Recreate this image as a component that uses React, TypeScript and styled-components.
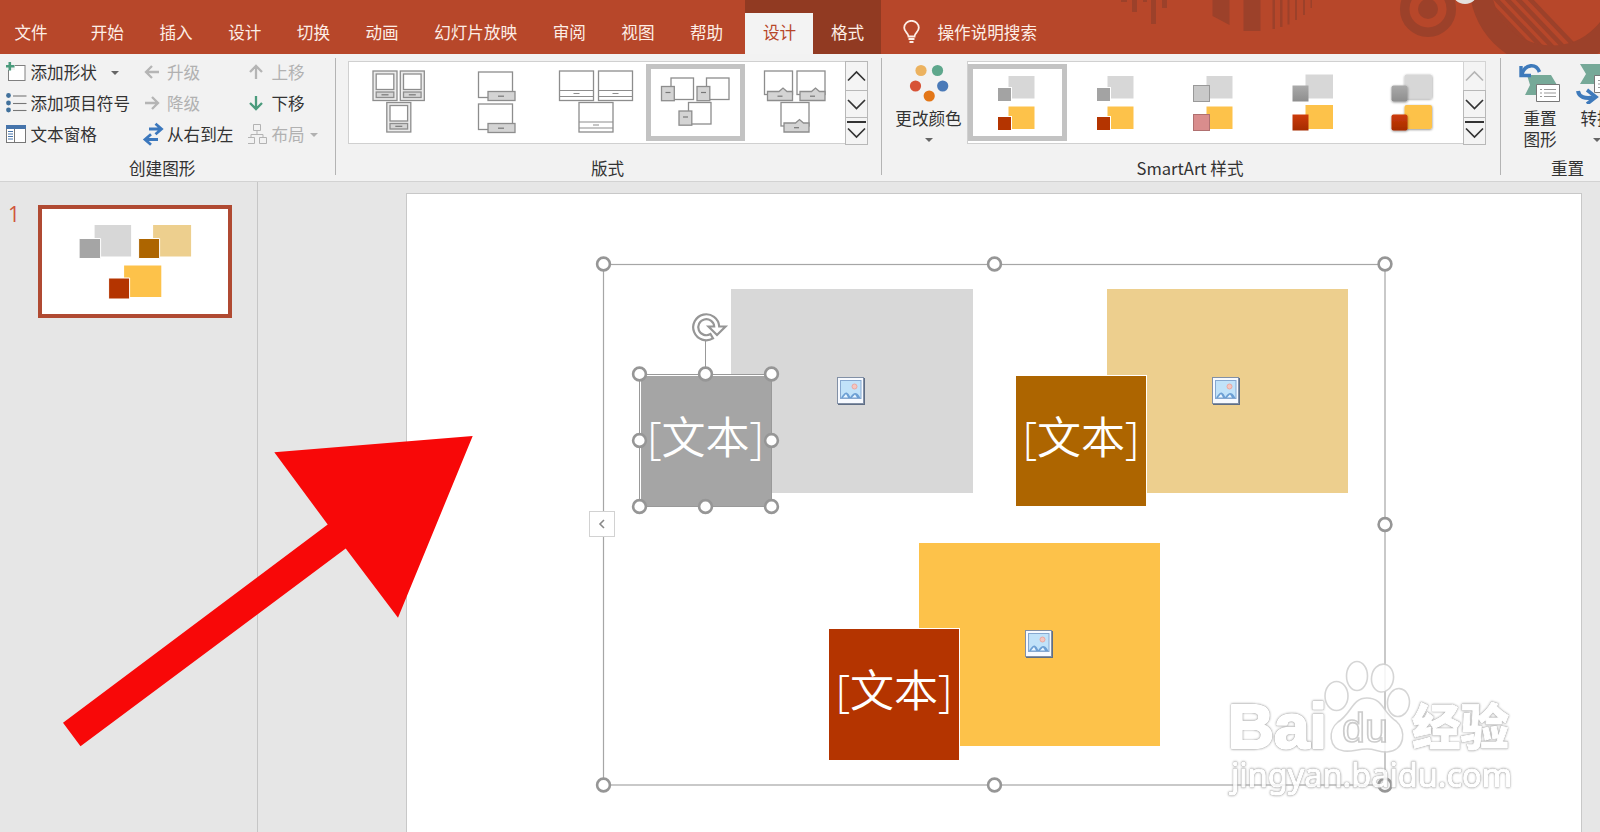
import React from "react";
import styled, { createGlobalStyle, css } from "styled-components";

const GlobalStyle = createGlobalStyle`
  * { box-sizing: border-box; }
  html, body { margin: 0; padding: 0; }
  body { overflow: hidden; font-family: "Noto Sans CJK SC", "Noto Sans", sans-serif; }
`;

const Window = styled.div`
  width: 1600px;
  height: 832px;
  position: relative;
  display: flex;
  flex-direction: column;
  overflow: hidden;
  background: #e6e6e6;
  font-size: 16.6px;
  color: #333;
`;

/* ---------- title / tab strip ---------- */

const TabStrip = styled.header`
  position: relative;
  flex: 0 0 54px;
  display: flex;
  background: #b7472a;
`;

const HeaderArt = styled.svg`
  position: absolute;
  right: 0;
  top: 0;
`;

const Tab = styled.div<{ $first?: boolean }>`
  display: flex;
  align-items: center;
  height: 54px;
  padding: 9px 17.75px 0;
  line-height: 24px;
  white-space: nowrap;
  color: #fdeee6;
  ${(p) => p.$first && css`width: 73px; padding-left: 14.5px;`}
`;

const ContextTabs = styled.div`
  display: flex;
  align-items: flex-end;
  width: 136px;
  margin-left: 4.5px;
  background: #913a22;
`;

const ContextTab = styled.div<{ $active?: boolean }>`
  flex: 1;
  height: 41.5px;
  line-height: 39px;
  text-align: center;
  color: ${(p) => (p.$active ? "#b7472a" : "#fdeee6")};
  background: ${(p) => (p.$active ? "#f3f3f3" : "transparent")};
`;

const TellMe = styled.div`
  display: flex;
  align-items: center;
  gap: 17px;
  padding: 9px 0 0 22px;
  color: #fdeee6;
`;

/* ---------- ribbon ---------- */

const Ribbon = styled.section`
  flex: 0 0 128px;
  display: flex;
  background: #f2f2f2;
  border-bottom: 1px solid #d2d2d2;
`;

const Group = styled.div<{ $width: number }>`
  position: relative;
  flex: 0 0 ${(p) => p.$width}px;
  display: flex;
  flex-direction: column;
`;

const GroupDivider = styled.div`
  flex: 0 0 1px;
  height: 117px;
  margin-top: 4px;
  background: #b4b4b4;
`;

const GroupBody = styled.div<{ $left: number }>`
  display: flex;
  height: 102px;
  padding-left: ${(p) => p.$left}px;
`;

const GroupLabel = styled.div<{ $left: number }>`
  padding-left: ${(p) => p.$left}px;
  height: 24px;
  line-height: 25px;
  white-space: nowrap;
`;

const CommandColumn = styled.div<{ $width: number; $iconWidth: number }>`
  flex: 0 0 ${(p) => p.$width}px;
  display: grid;
  grid-template-rows: repeat(3, 31px);
  padding-top: 3px;
  height: 97px;
  --icon-width: ${(p) => p.$iconWidth}px;
`;

const Command = styled.div<{ $disabled?: boolean }>`
  display: grid;
  grid-template-columns: var(--icon-width) auto 1fr;
  align-items: center;
  white-space: nowrap;
  line-height: 24px;
  color: ${(p) => (p.$disabled ? "#b1b1b1" : "#333")};
  svg { display: block; }
  span { padding-bottom: 2px; }
`;

const Caret = styled.i<{ $gap?: number; $drop?: number; $light?: boolean }>`
  width: 0;
  height: 0;
  margin-left: ${(p) => p.$gap ?? 0}px;
  margin-top: ${(p) => p.$drop ?? 0}px;
  border: 4px solid transparent;
  border-top: 4px solid ${(p) => (p.$light ? "#b1b1b1" : "#666")};
  border-bottom: 0;
`;

const Gallery = styled.div`
  display: flex;
  height: 83px;
  margin-top: 7px;
`;

const GalleryItems = styled.div<{ $width: number }>`
  width: ${(p) => p.$width}px;
  display: flex;
  background: #fff;
  border: 1px solid #d0d0d0;
  border-right: 0;
`;

const GalleryItem = styled.div<{ $selected?: boolean }>`
  flex: 0 0 99px;
  height: 77px;
  margin-top: 2px;
  ${(p) => p.$selected && css`box-shadow: inset 0 0 0 5px #c3c3c3;`}
  svg { display: block; overflow: visible; }
`;

const Scroller = styled.div`
  width: 23px;
  display: grid;
  grid-template-rows: 29px 27px 27px;
`;

const ScrollButton = styled.div<{ $off?: boolean }>`
  display: flex;
  align-items: center;
  justify-content: center;
  border: 1px solid ${(p) => (p.$off ? "#d4d4d4" : "#b8b8b8")};
  margin-bottom: -1px;
  background: #f4f4f4;
  color: ${(p) => (p.$off ? "#b5b5b5" : "#333")};
`;

const BigButton = styled.div<{ $width: number }>`
  width: ${(p) => p.$width}px;
  flex-shrink: 0;
  display: flex;
  flex-direction: column;
  align-items: center;
  padding-top: 8px;
  line-height: 21px;
  white-space: nowrap;
  svg { display: block; margin-bottom: 4px; flex-shrink: 0; }
`;

/* ---------- workspace ---------- */

const Workspace = styled.main`
  flex: 1;
  display: flex;
  min-height: 0;
`;

const SlideList = styled.aside`
  flex: 0 0 258px;
  display: flex;
  align-items: flex-start;
  padding: 23px 0 0 8px;
  border-right: 1px solid #c6c6c6;
`;

const SlideNumber = styled.span`
  width: 29.5px;
  margin-top: -3.5px;
  font: 21px/24px "Open Sans", sans-serif;
  color: #d0553c;
`;

const Thumbnail = styled.div`
  width: 194.5px;
  height: 113px;
  background: #fff;
  border: 4px solid #b04a32;
  svg { display: block; }
`;

const Editor = styled.div`
  flex: 1;
  padding: 11px 0 0 148px;
`;

const Slide = styled.div`
  width: 1176px;
  height: 660px;
  padding: 1px 0 0 1px;
  background: #fff;
  border: 1px solid #c8c8c8;
`;

const Canvas = styled.div`
  position: relative;
  width: 1173px;
  height: 637px;
`;

const Shape = styled.div<{ $x: number; $y: number; $w: number; $h: number; $fill: string; $outline?: boolean }>`
  position: absolute;
  left: ${(p) => p.$x}px;
  top: ${(p) => p.$y}px;
  width: ${(p) => p.$w}px;
  height: ${(p) => p.$h}px;
  display: flex;
  align-items: center;
  justify-content: center;
  background: ${(p) => p.$fill};
  ${(p) => p.$outline && css`box-shadow: 0 0 0 1px #fff;`}
`;

const Placeholder = styled.span`
  padding-bottom: 9px;
  font: 350 44px/60px "Open Sans", "Noto Sans CJK SC", sans-serif;
  color: #fff;
  white-space: nowrap;
`;

const PicturePosition = styled.div<{ $x: number; $y: number }>`
  position: absolute;
  left: ${(p) => p.$x}px;
  top: ${(p) => p.$y}px;
  svg { display: block; }
`;

const CanvasOverlay = styled.svg`
  position: absolute;
  left: 0;
  top: 0;
  pointer-events: none;
`;

const Glow = styled.g`
  filter: drop-shadow(0 0 0.6px #777) drop-shadow(0 0 0.8px #999);
`;

const PaneToggle = styled.div`
  position: absolute;
  left: 181px;
  top: 316px;
  width: 26px;
  height: 26px;
  display: flex;
  align-items: center;
  justify-content: center;
  background: #fff;
  border: 1px solid #d2d2d2;
`;

/* ---------- icons ---------- */

const Chevron = ({ up, bar }: { up?: boolean; bar?: boolean }) => (
  <svg width="21" height="25" viewBox="0 0 21 25" fill="none" stroke="currentColor" strokeWidth="1.7">
    {bar && <path d="M1 3H20" strokeWidth="2" />}
    <path d={up ? "M2 16.5L10.5 8L19 16.5" : bar ? "M2 9.500L10.5 18L19 9.500" : "M2 8L10.5 16.5L19 8"} />
  </svg>
);

const AddShapeIcon = () => (
  <svg width="22" height="22" fill="none">
    <rect x="2.5" y="3.5" width="16.500" height="15" fill="#fff" stroke="#808080" />
    <path d="M0 0h9v8H0z" fill="#f2f2f2" />
    <path d="M3.800 0v8.500M-.5 4.200h9" stroke="#4a9b7c" strokeWidth="2.600" />
  </svg>
);
const BulletsIcon = () => (
  <svg width="22" height="22">
    {[2.5, 10, 17].map((y) => (
      <g key={y}>
        <circle cx="2.500" cy={y} r="2.400" fill="#41719c" />
        <path d={`M7 ${y + 0.5}H20.500`} stroke="#777" strokeWidth="1.100" />
      </g>
    ))}
  </svg>
);
const TextPaneIcon = () => (
  <svg width="22" height="22">
    <rect x=".5" y="1.500" width="19" height="17" fill="#fff" stroke="#777" />
    <path d="M0 1h20v4H0z" fill="#4674ab" />
    <path d="M8.500 5v13" stroke="#777" />
    <path d="M2 7.500h5M2 10h5M2 12.500h5M2 15h5" stroke="#4674ab" />
  </svg>
);
const ArrowIcon = ({ turn, color }: { turn: number; color: string }) => (
  <svg width="16" height="18" viewBox="0 0 16 18" fill="none" stroke={color} strokeWidth="2.300">
    <path d="M15 8H2M8 2L2 8l6 6" transform={`rotate(${turn} 8 8)`} />
  </svg>
);
const SwapIcon = () => (
  <svg width="20" height="24" fill="none" stroke="#3c78bd" strokeWidth="2.800" overflow="visible">
    <path d="M5 6h12M11.500 .8L17.500 6L11.500 11.200M14 16.500H1M7 11.300L1 16.500L7 21.700" />
  </svg>
);
const LayoutIcon = () => (
  <svg width="20" height="22" fill="none" stroke="#b3b3b3">
    <path d="M5.500 .5h7v6h-7zM-.5 13.500h7v6h-7zM11.500 13.500h7v6h-7zM9 7v3.500M3 13.500v-3h12v3" />
  </svg>
);
const BulbIcon = () => (
  <svg width="17" height="23" viewBox="0 0 17 23" fill="none" stroke="#fdeee6" strokeWidth="1.800">
    <path d="M5.500 16.500C5.500 13 1.200 12 1.200 7.800a7.300 7 0 0 1 14.600 0C15.800 12 11.500 13 11.500 16.500zM5.500 19h6M6.500 22h4" />
  </svg>
);
const ColorDotsIcon = () => (
  <svg width="42" height="42">
    <circle cx="13" cy="8.500" r="5.600" fill="#ecb25f" />
    <circle cx="29.500" cy="8.500" r="5.600" fill="#5ea78c" />
    <circle cx="7.500" cy="24" r="5.600" fill="#d75337" />
    <circle cx="34.700" cy="24" r="5.600" fill="#4a7ab8" />
    <circle cx="21.200" cy="34" r="5.600" fill="#e37617" />
  </svg>
);
const ResetIcon = () => (
  <svg width="42" height="42" viewBox="0 0 42 42">
    <path d="M8 13h24l6 10-6 10H6l5-10z" fill="#76a998" />
    <path d="M3 12C6 2 18 1 21 11" fill="none" stroke="#f2f2f2" strokeWidth="6" />
    <path d="M3 12C6 2 17 1 20.500 10" fill="none" stroke="#3e7abb" strokeWidth="3.600" />
    <path d="M2 4v9.500h10" fill="none" stroke="#3e7abb" strokeWidth="3.400" />
    <path d="M17.500 22.500h23v17h-23z" fill="#fff" stroke="#777" />
    <path d="M21 27.500h2M25 27.500h12M21 31h2M25 31h12M21 34.500h2M25 34.500h12" stroke="#999" />
  </svg>
);
const ConvertIcon = () => (
  <svg width="42" height="42" viewBox="0 0 42 42">
    <path d="M4 2h38v20H4l6-10z" fill="#76a998" />
    <path d="M18.500 13.500h24v17h-24z" fill="#fff" stroke="#777" />
    <path d="M22 18.500h2M26 18.500h12M22 22h2M26 22h12M22 25.500h2" stroke="#999" />
    <path d="M2 29c1 6 7 8 15 6.500" fill="none" stroke="#3e7abb" strokeWidth="4" />
    <path d="M11 28l9 7-9 7" fill="none" stroke="#3e7abb" strokeWidth="3.500" />
    <circle cx="28" cy="37" r="4" fill="#ad8336" />
  </svg>
);
const PictureIcon = () => (
  <svg width="28" height="28">
    <rect x="1" y="1" width="27" height="27" fill="#5f6e85" />
    <rect x=".5" y=".5" width="26" height="26" fill="#f7faff" stroke="#8290a6" />
    <rect x="3.500" y="3.500" width="20.500" height="18" fill="#c1e2f9" stroke="#86a8d0" />
    <circle cx="17.500" cy="9.500" r="2.500" fill="#f5c6c0" stroke="#eba7a0" />
    <path d="M4 21c1-2 3-5 5-5.500s4 4 4.500 4.500c1-2 3-4 5-4s4 3 5 5z" fill="#6c9fd4" />
    <path d="M6 20.500l3-3.500 2 3.500zM15 20.500l3-3 2 3z" fill="#e9f6ff" />
  </svg>
);

/* layout gallery previews, drawn in a 99 x 77 cell */
const ink = { fill: "#fff", stroke: "#8d8d8d", strokeWidth: 1.3 };
const tone = { fill: "#d4d4d4", stroke: "#8d8d8d", strokeWidth: 1.3 };

const FramedPreview = () => (
  <svg width="99" height="77">
    {[[24, 7], [51.3, 7], [37.8, 38.5]].map(([x, y]) => (
      <g key={x} transform={`translate(${x} ${y})`}>
        <rect width="24" height="29.500" {...ink} fill="#ececec" />
        <rect x="3.200" y="3" width="17.600" height="15.500" {...ink} />
        <rect x="3.200" y="21" width="17.600" height="5.500" {...tone} />
        <path d="M8.500 23.800h7" stroke="#777" strokeWidth="1.200" />
      </g>
    ))}
  </svg>
);
const CaptionPreview = () => (
  <svg width="99" height="77">
    {[8, 40].map((y) => (
      <g key={y} transform={`translate(30.500 ${y})`}>
        <rect width="34" height="25.500" {...ink} />
        <rect x="9.500" y="19.500" width="27" height="9" {...tone} />
        <path d="M19.500 24.200h6" stroke="#777" strokeWidth="1.200" />
      </g>
    ))}
  </svg>
);
const StripPreview = () => (
  <svg width="99" height="77">
    {[[12.5, 7], [51.5, 7], [32, 38.5]].map(([x, y]) => (
      <g key={x} transform={`translate(${x} ${y})`}>
        <rect width="34" height="29.500" {...ink} />
        <path d="M0 19.500h34M0 25.500h34M14 22.500h6" stroke="#8d8d8d" strokeWidth="1.200" />
      </g>
    ))}
  </svg>
);
const OffsetPreview = () => (
  <svg width="99" height="77">
    {[[15.5, 14], [51, 14], [33, 38.5]].map(([x, y]) => (
      <g key={x} transform={`translate(${x} ${y})`}>
        <rect x="9.500" width="22.500" height="21.500" {...ink} />
        <rect y="8.500" width="12.800" height="14.200" {...tone} />
        <path d="M4 14.500h5" stroke="#777" strokeWidth="1.200" />
      </g>
    ))}
  </svg>
);
const BumpPreview = () => (
  <svg width="99" height="77">
    {[[19.5, 7], [52, 7], [36, 38.5]].map(([x, y]) => (
      <g key={x} transform={`translate(${x} ${y})`}>
        <rect width="28" height="23.500" {...ink} />
        <path d="M3 20.500h11.500l4-3.500 4 3.500H28v9H3z" {...tone} />
        <path d="M13 25.200h5" stroke="#777" strokeWidth="1.200" />
      </g>
    ))}
  </svg>
);

type StyleKind = "flat" | "glass" | "shaded" | "raised";
const StylePreview = ({ kind }: { kind: StyleKind }) => {
  const glass = kind === "glass";
  const shaded = kind === "shaded" || kind === "raised";
  const r = kind === "raised" ? 2 : 0;
  const grow = kind === "flat" || glass ? 0 : 1.5;
  const small = glass || shaded ? 16 : 14;
  const gid = `style-${kind}`;
  return (
    <svg width="99" height="77" viewBox="1.500 0 99 77">
      <defs>
        <linearGradient id={`${gid}-g`} x2="0" y2="1">
          <stop stopColor="#aaa" /><stop offset="1" stopColor="#8e8e8e" />
        </linearGradient>
        <linearGradient id={`${gid}-r`} x2="0" y2="1">
          <stop stopColor="#cd3b0b" /><stop offset="1" stopColor="#a52c00" />
        </linearGradient>
        <filter id={`${gid}-s`} x="-20%" y="-20%" width="150%" height="150%">
          <feDropShadow dx=".2" dy=".8" stdDeviation="1" floodOpacity=".45" />
        </filter>
      </defs>
      <g filter={kind === "raised" ? `url(#${gid}-s)` : undefined}>
        <rect x="42" y={12 - grow} width={26 + grow} height={22.5 + grow} rx={r} fill="#d7d7d7" />
        <rect x="42" y={42.5 - grow} width={26 + grow} height={22.5 + grow} rx={r} fill="#fdc24a" />
      </g>
      <g stroke={glass ? "#999" : shaded ? "none" : "#fff"}
         filter={kind === "raised" ? `url(#${gid}-s)` : undefined}>
        <rect x={45 - small} y={37.5 - small} width={small} height={small} rx={r}
          fill={glass ? "#c9c9c9" : shaded ? `url(#${gid}-g)` : "#a3a3a3"} />
        <rect x={45 - small} y={66.5 - small} width={small} height={small} rx={r}
          fill={glass ? "#d98d8d" : shaded ? `url(#${gid}-r)` : "#b43400"} stroke={glass ? "#b07070" : undefined} />
      </g>
    </svg>
  );
};

/* ---------- slide overlays ---------- */

const Handle = ({ x, y }: { x: number; y: number }) => (
  <circle cx={x} cy={y} r="6.400" fill="#fff" stroke="#969696" strokeWidth="2.600" />
);

const frameHandles = [[603.5, 264], [994.5, 264], [1385, 264], [1385, 524.5], [603.5, 785], [994.5, 785], [1385, 785]];
const shapeHandles = [[639.5, 374], [705.5, 374], [771.5, 374], [639.5, 440.5], [771.5, 440.5], [639.5, 506.5], [705.5, 506.5], [771.5, 506.5]];

const Selection = () => (
  <CanvasOverlay width="1173" height="637" viewBox="408 195 1173 637">
    <g fill="none" stroke="#a6a6a6">
      <rect x="603.500" y="264.500" width="781.500" height="520.500" strokeWidth="1.200" />
      <rect x="639.500" y="374.500" width="132" height="132" stroke="#999" />
      <path d="M640.500 505V375.500H770" stroke="#fff" />
      <path d="M705.500 341V368" stroke="#999" />
    </g>
    {[...frameHandles, ...shapeHandles].map(([x, y]) => <Handle key={`${x}-${y}`} x={x} y={y} />)}
    <g fill="#fff" stroke="#969696" strokeWidth="2.200">
      <path d="M719.200 326.500A13 13 0 1 0 713 338.400L710.500 334A8 8 0 1 1 714.200 326.500H708.500L717 335L725.500 326.500Z" />
    </g>
  </CanvasOverlay>
);

const Watermark = () => (
  <CanvasOverlay width="1173" height="637" viewBox="408 195 1173 637" opacity=".86">
    <Glow fill="#fff" stroke="#fff" strokeWidth="2.600" strokeLinejoin="round">
      <text x="1228" y="748" fontSize="63" fontWeight="700" textLength="99" lengthAdjust="spacingAndGlyphs"
        fontFamily="Liberation Sans, sans-serif">Bai</text>
      <text x="1412" y="745" fontSize="48.500" fontWeight="900" strokeWidth="1"
        fontFamily="Noto Sans CJK SC, sans-serif">经验</text>
      <text x="1231" y="787" fontSize="33" textLength="281" lengthAdjust="spacingAndGlyphs"
        strokeWidth="1.200" fontFamily="Noto Sans, sans-serif">jingyan.baidu.com</text>
    </Glow>
    <g fill="#fff" stroke="#cfcfcf" strokeWidth="1.600">
      <ellipse cx="1336.500" cy="696" rx="11.500" ry="14.500" />
      <ellipse cx="1357" cy="676" rx="10.500" ry="14.500" />
      <ellipse cx="1382.500" cy="678" rx="11" ry="14" transform="rotate(8 1382 678)" />
      <ellipse cx="1398.500" cy="702.500" rx="11" ry="14" transform="rotate(5 1398 702)" />
      <path d="M1367 698C1383 698 1383 713 1396 721C1407 730 1405 751 1387 752C1377 752 1376 749 1367 749C1357 749 1353 752 1344 751C1328 749 1328 730 1338 722C1352 713 1352 698 1367 698Z" />
      <text x="1342" y="742" fontSize="40" textLength="46" lengthAdjust="spacingAndGlyphs" stroke="#c4c4c4"
        fontFamily="Liberation Sans, sans-serif">du</text>
    </g>
  </CanvasOverlay>
);

const RedArrow = () => (
  <CanvasOverlay width="1600" height="832">
    <path d="M472.700 436L274.300 452.300L327.700 524.500L63 722.700L80.500 746.300L345.700 548.500L398 617.700Z" fill="#f80808" />
  </CanvasOverlay>
);

const HeaderDecoration = () => (
  <HeaderArt width="500" height="54" viewBox="1100 0 500 54">
    <defs>
      <clipPath id="dial"><circle cx="1552" cy="-15" r="61" /></clipPath>
    </defs>
    <g fill="#9c412a">
      <path d="M1121 0h6v2h-6zM1132 0h5v12h-5zM1143 0h4v2h-4zM1151 0h5v24h-5zM1162 0h5v8h-5z" />
      <path d="M1212.500 0h17v25l-17-9zM1243.500 0h17v31h-17z" />
      <path d="M1272.500 0h2.500v29h-2.500zM1280 0h2.500v27h-2.500zM1287.500 0h2v24.500h-2zM1295 0h2v20h-2zM1303 0h2v15h-2zM1310.500 0h1.500v8h-1.500z" />
      <circle cx="1428" cy="9" r="10" />
    </g>
    <circle cx="1428" cy="9" r="23.300" fill="none" stroke="#9c412a" strokeWidth="9.500" />
    <circle cx="1552" cy="-15" r="71.500" fill="none" stroke="#9c412a" strokeWidth="22" />
    <g clipPath="url(#dial)" stroke="#9c412a" strokeWidth="4.500">
      {[1481, 1492, 1503, 1514, 1526].map((x) => <path key={x} d={`M${x} -5L${x + 60} 58`} />)}
    </g>
    <circle cx="1465" cy="-9" r="13" fill="#e4e0de" />
  </HeaderArt>
);

const tabs = ["文件", "开始", "插入", "设计", "切换", "动画", "幻灯片放映", "审阅", "视图", "帮助"];
const previews = [FramedPreview, CaptionPreview, StripPreview, OffsetPreview, BumpPreview];
const styleKinds: StyleKind[] = ["flat", "flat", "glass", "shaded", "raised"];

const GalleryScroller = ({ atTop }: { atTop?: boolean }) => (
  <Scroller>
    <ScrollButton $off={atTop}><Chevron up /></ScrollButton>
    <ScrollButton><Chevron /></ScrollButton>
    <ScrollButton><Chevron bar /></ScrollButton>
  </Scroller>
);

export default function App() {
  return (
    <Window>
      <GlobalStyle />
      <TabStrip>
        <HeaderDecoration />
        {tabs.map((t, i) => <Tab key={t} $first={i === 0}>{t}</Tab>)}
        <ContextTabs>
          <ContextTab $active>设计</ContextTab>
          <ContextTab>格式</ContextTab>
        </ContextTabs>
        <TellMe><BulbIcon /><span>操作说明搜索</span></TellMe>
      </TabStrip>

      <Ribbon>
        <Group $width={335}>
          <GroupBody $left={6}>
            <CommandColumn $width={138} $iconWidth={24.5}>
              <Command><AddShapeIcon /><span>添加形状</span><Caret $gap={14} /></Command>
              <Command><BulletsIcon /><span>添加项目符号</span></Command>
              <Command><TextPaneIcon /><span>文本窗格</span></Command>
            </CommandColumn>
            <CommandColumn $width={104} $iconWidth={23}>
              <Command $disabled><ArrowIcon turn={0} color="#b5b5b5" /><span>升级</span></Command>
              <Command $disabled><ArrowIcon turn={180} color="#b5b5b5" /><span>降级</span></Command>
              <Command><SwapIcon /><span>从右到左</span></Command>
            </CommandColumn>
            <CommandColumn $width={80} $iconWidth={23.5}>
              <Command $disabled><ArrowIcon turn={90} color="#b5b5b5" /><span>上移</span></Command>
              <Command><ArrowIcon turn={270} color="#4a9b7c" /><span>下移</span></Command>
              <Command $disabled><LayoutIcon /><span>布局</span><Caret $gap={5} $light /></Command>
            </CommandColumn>
          </GroupBody>
          <GroupLabel $left={129}>创建图形</GroupLabel>
        </Group>
        <GroupDivider />

        <Group $width={545}>
          <GroupBody $left={12}>
            <Gallery>
              <GalleryItems $width={497}>
                {previews.map((P, i) => <GalleryItem key={i} $selected={i === 3}><P /></GalleryItem>)}
              </GalleryItems>
              <GalleryScroller />
            </Gallery>
          </GroupBody>
          <GroupLabel $left={255}>版式</GroupLabel>
        </Group>
        <GroupDivider />

        <Group $width={618}>
          <GroupBody $left={8}>
            <BigButton $width={77}>
              <ColorDotsIcon />
              <span>更改颜色</span>
              <Caret $drop={9} />
            </BigButton>
            <Gallery>
              <GalleryItems $width={496}>
                {styleKinds.map((k, i) => <GalleryItem key={i} $selected={i === 0}><StylePreview kind={k} /></GalleryItem>)}
              </GalleryItems>
              <GalleryScroller atTop />
            </Gallery>
          </GroupBody>
          <GroupLabel $left={254.5}>SmartArt 样式</GroupLabel>
        </Group>
        <GroupDivider />

        <Group $width={99}>
          <GroupBody $left={8}>
            <BigButton $width={62}><ResetIcon /><span>重置</span><span>图形</span></BigButton>
            <BigButton $width={52}><ConvertIcon /><span>转换</span><Caret $drop={9} /></BigButton>
          </GroupBody>
          <GroupLabel $left={50}>重置</GroupLabel>
        </Group>
      </Ribbon>

      <Workspace>
        <SlideList>
          <SlideNumber>1</SlideNumber>
          <Thumbnail>
            <svg width="187" height="105" viewBox="41.900 209 187 105">
              <path d="M94.500 225h36.500v31.500H94.500z" fill="#d7d7d7" />
              <path d="M153 225h38v31.500h-38z" fill="#edcf8e" />
              <path d="M124 265.500h37.200V297H124z" fill="#fdc24a" />
              <g stroke="#fff">
                <path d="M79 238.500h21.500v20H79z" fill="#a5a5a5" />
                <path d="M138.500 238.500H159.500v20h-21z" fill="#ad6500" />
                <path d="M108.500 278H129.500v21h-21z" fill="#b43400" />
              </g>
            </svg>
          </Thumbnail>
        </SlideList>
        <Editor>
          <Slide>
            <Canvas>
              <Shape $x={323} $y={94} $w={242} $h={203.5} $fill="#d8d8d8" />
              <Shape $x={699} $y={94} $w={241} $h={203.5} $fill="#edcf8e" />
              <Shape $x={511} $y={348} $w={241} $h={203} $fill="#fdc24a" />
              <Shape $x={232} $y={181} $w={131} $h={131} $fill="#a5a5a5"><Placeholder>[文本]</Placeholder></Shape>
              <Shape $x={608} $y={181} $w={130} $h={130} $fill="#ad6500" $outline><Placeholder>[文本]</Placeholder></Shape>
              <Shape $x={421} $y={434} $w={130} $h={130.5} $fill="#b43400" $outline><Placeholder>[文本]</Placeholder></Shape>
              <PicturePosition $x={429} $y={182}><PictureIcon /></PicturePosition>
              <PicturePosition $x={804} $y={182}><PictureIcon /></PicturePosition>
              <PicturePosition $x={617} $y={435}><PictureIcon /></PicturePosition>
              <Selection />
              <PaneToggle>
                <svg width="8" height="10" fill="none" stroke="#888" strokeWidth="1.600"><path d="M6 1L2 5l4 4" /></svg>
              </PaneToggle>
              <Watermark />
            </Canvas>
          </Slide>
        </Editor>
      </Workspace>
      <RedArrow />
    </Window>
  );
}
